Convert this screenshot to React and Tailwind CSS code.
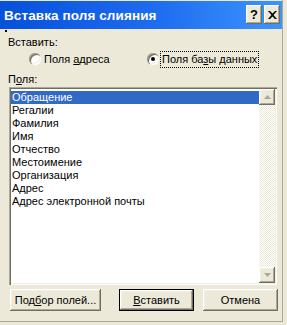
import React from "react";

const fields = [
  "Обращение",
  "Регалии",
  "Фамилия",
  "Имя",
  "Отчество",
  "Местоимение",
  "Организация",
  "Адрес",
  "Адрес электронной почты",
];

// classic raised 3d edge
const raised =
  "bg-[#ECE9D8] shadow-[inset_-1px_-1px_#716F64,inset_1px_1px_#FFFFFF,inset_-2px_-2px_#ACA899,inset_2px_2px_#F1EFE2]";

function Radio({ checked }) {
  return (
    <span className="relative inline-block w-[12px] h-[12px] rounded-full bg-white shadow-[inset_1px_1px_#ACA899,inset_2px_2px_#716F64,inset_-1px_-1px_#FFFFFF,inset_-2px_-2px_#F1EFE2]">
      {checked && (
        <span className="absolute left-[4px] top-[4px] w-[4px] h-[4px] rounded-full bg-black" />
      )}
    </span>
  );
}

function Arrow({ up }) {
  return (
    <svg width="7" height="4" viewBox="0 0 7 4">
      {up ? (
        <path d="M3.5 0 L7 4 L0 4 Z" fill="#ACA899" />
      ) : (
        <path d="M0 0 L7 0 L3.5 4 Z" fill="#ACA899" />
      )}
    </svg>
  );
}

export default function App() {
  return (
    <div className="w-[287px] h-[325px] bg-[#ECE9D8] overflow-hidden font-['Liberation_Sans',Arial,sans-serif] text-[11px] text-black leading-[13px]">
      <div className="w-[283px] h-[322px] border-r border-b border-[#ACA899] flex flex-col">
        {/* title bar */}
        <div className="h-[28px] mt-[1px] flex items-center justify-between pl-[4px] pr-[2px] bg-[linear-gradient(90deg,#0650DA,#1E6CF0_55%,#3D94FC)]">
          <span className="text-white font-bold text-[13.5px] tracking-[0.1px]">Вставка поля слияния</span>
          <div className="flex gap-[2px] mt-[-1px]">
            <div className={`w-[16px] h-[19px] flex items-center justify-center ${raised}`}>
              <span className="font-bold text-[13px] leading-none mb-[1px]">?</span>
            </div>
            <div className={`w-[16px] h-[19px] flex items-center justify-center ${raised}`}>
              <svg width="9" height="8" viewBox="0 0 9 8">
                <path d="M0 0 h2 l2.5 2.5 l2.5 -2.5 h2 l-3.5 4 l3.5 4 h-2 l-2.5 -2.5 l-2.5 2.5 h-2 l3.5 -4 z" fill="#000" />
              </svg>
            </div>
          </div>
        </div>

        <div className="flex flex-col pl-[8px]">
          <div className="w-[2px] h-[2px] bg-black ml-[-3px] mt-[1px]" />
          <div className="mt-[4px]">Вставить:</div>

          <div className="flex items-center mt-[2px] h-[16px]">
            <div className="flex items-center ml-[21px] w-[118px]">
              <Radio />
              <span className="ml-[3px]">
                Поля <span className="underline">а</span>дреса
              </span>
            </div>
            <div className="flex items-center">
              <Radio checked />
              <span className="ml-[1px] px-[1px] py-[1px] border border-dotted border-black">
                Поля ба<span className="underline">з</span>ы данных
              </span>
            </div>
          </div>

          <div className="mt-[6px]">
            П<span className="underline">о</span>ля:
          </div>

          {/* list box */}
          <div className="mt-[1px] w-[268px] h-[198px] flex bg-white shadow-[inset_1px_1px_#ACA899,inset_2px_2px_#716F64,inset_-1px_-1px_#FFFFFF,inset_-2px_-2px_#F1EFE2] p-[2px] ml-[1px]">
            <div className="flex-1 flex flex-col pt-[2px]">
              {fields.map((f, i) => (
                <div
                  key={f}
                  className={`h-[13px] pl-[1px] leading-[13px] ${
                    i === 0 ? "bg-[#316AC5] text-white" : ""
                  }`}
                >
                  {f}
                </div>
              ))}
            </div>
            <div className="w-[16px] flex flex-col bg-[repeating-conic-gradient(#FFFFFF_0_25%,#ECE9D8_0_50%)] bg-[length:2px_2px]">
              <div className={`h-[16px] flex items-center justify-center ${raised}`}>
                <Arrow up />
              </div>
              <div className="flex-1" />
              <div className={`h-[16px] flex items-center justify-center ${raised}`}>
                <Arrow />
              </div>
            </div>
          </div>

          {/* buttons */}
          <div className="flex mt-[4px] ml-[2px]">
            <button className={`w-[91px] h-[22px] ${raised}`}>
              Под<span className="underline">б</span>ор полей...
            </button>
            <button className={`ml-[18px] w-[75px] h-[22px] border border-black ${raised}`}>
              <span className="underline">В</span>ставить
            </button>
            <button className={`ml-[9px] w-[75px] h-[22px] ${raised}`}>Отмена</button>
          </div>
        </div>
      </div>
    </div>
  );
}
